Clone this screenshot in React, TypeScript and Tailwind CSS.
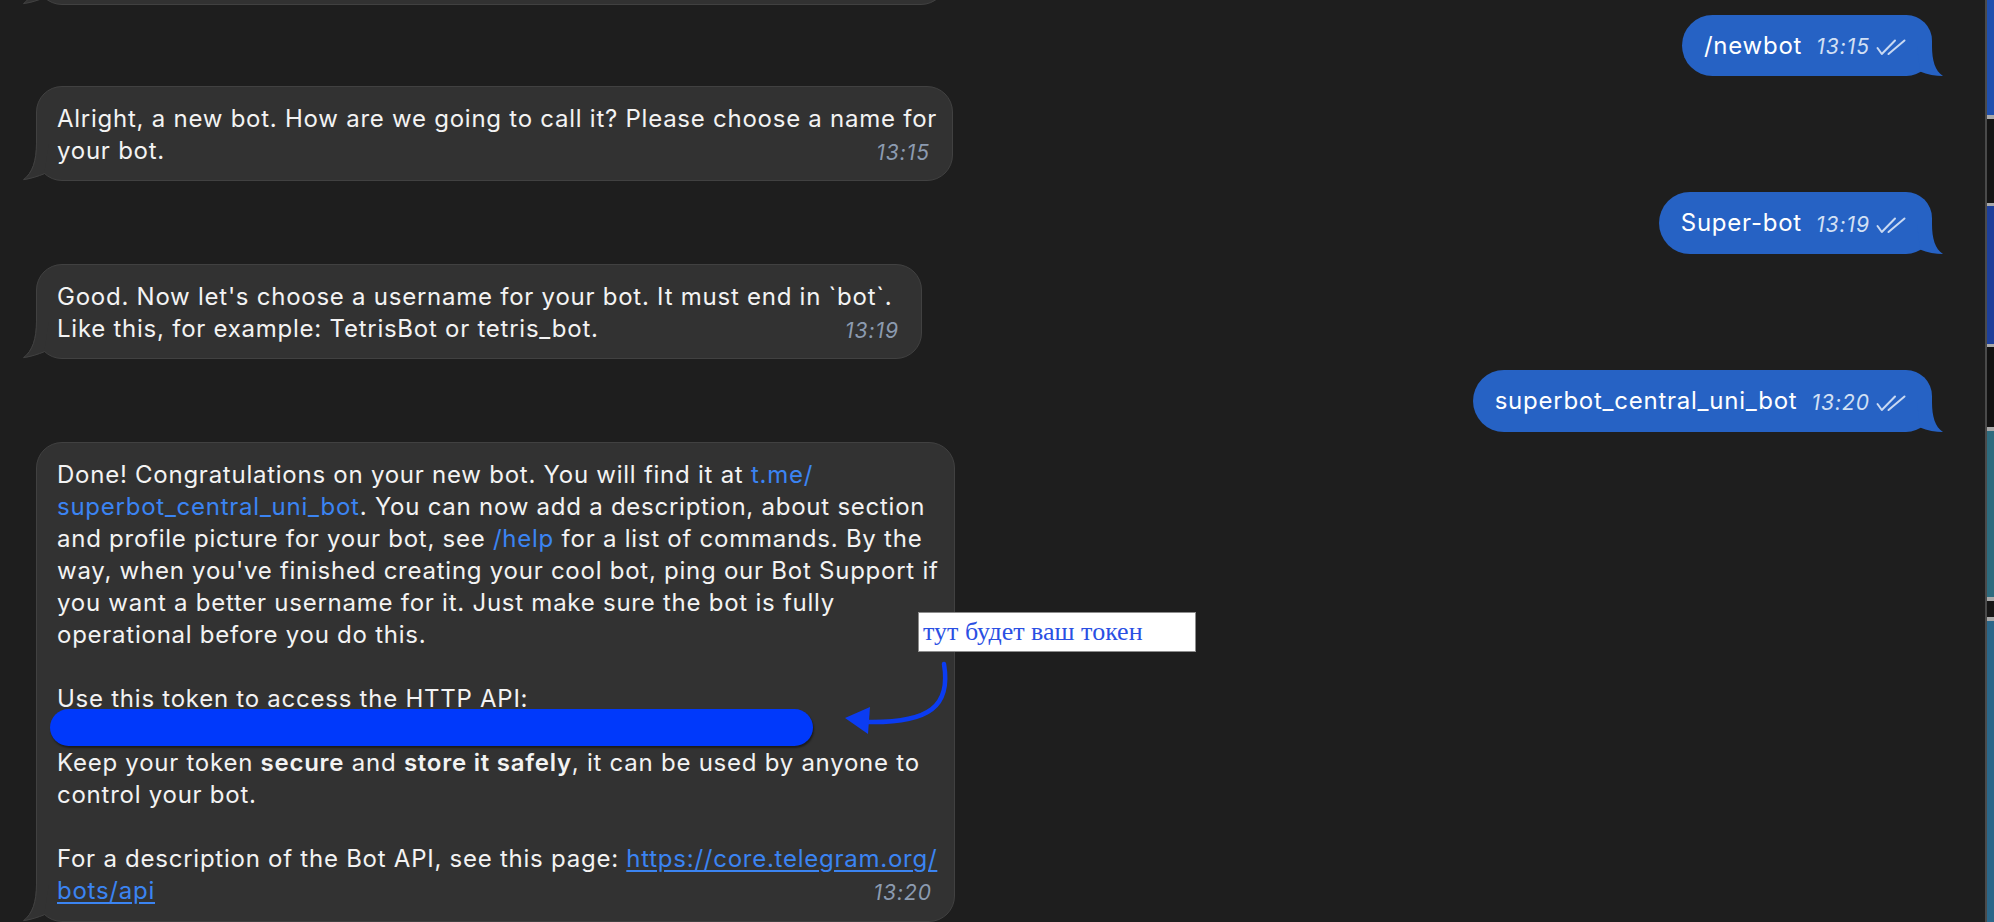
import React from "react";

function InTail() {
  return (
    <svg
      className="absolute left-[-14px] bottom-[-1px]"
      width="30"
      height="38"
      viewBox="0 0 30 38"
    >
      <path d="M13 0 C13 18 9 30 0 37 C8 36 15 33.5 21.2 30.8 L26 0 Z" fill="#323232" />
      <path
        d="M13.5 0 C13.5 18 9.5 30 0.5 36.6 C8 35.6 15 33.3 21.2 30.8"
        fill="none"
        stroke="#414141"
        strokeWidth="1"
      />
    </svg>
  );
}

function OutTail() {
  return (
    <svg
      className="absolute right-[-11px] bottom-0"
      width="26"
      height="30"
      viewBox="0 0 26 30"
    >
      <path d="M15 0 C15 14 18 25 26 30 C19 30 10 28.5 3 25.5 L0 0 Z" fill="#2662c4" />
    </svg>
  );
}

function Checks() {
  return (
    <svg width="30" height="17" viewBox="0 0 30 17" className="ml-[6px] mt-[4px]">
      <path
        d="M1.5 9 L5.8 15 L19 1.5 M12.5 15 L28.5 1.5"
        fill="none"
        stroke="#c9d9f2"
        strokeWidth="2"
        strokeLinecap="round"
        strokeLinejoin="round"
      />
    </svg>
  );
}

function OutBubble({ text, time, mt }: { text: string; time: string; mt: string }) {
  return (
    <div
      className={`relative self-end mr-[53px] h-[62px] flex items-center bg-[#2662c4] rounded-l-[31px] rounded-r-[26px] pl-[22px] pr-[26px] ${mt}`}
    >
      <span className="text-[24px] tracking-[0.75px] text-white leading-[32px]">{text}</span>
      <span className="ml-[14px] text-[21px] tracking-[1px] italic text-[#d3e0f4] leading-[32px] mt-[3px]">
        {time}
      </span>
      <Checks />
      <OutTail />
    </div>
  );
}

function Time({ t }: { t: string }) {
  return (
    <span className="text-[21px] tracking-[1px] italic text-[#8c9bb0] leading-[32px] mt-[2px]">{t}</span>
  );
}

const inBase =
  "relative ml-[36px] bg-[#323232] border border-[#414141] rounded-[26px] pl-[20px] pr-[22px] pt-[16px] text-[24px] tracking-[0.75px] leading-[32px] text-[#f3f3f3] whitespace-nowrap";

const link = "text-[#3b84f2]";

export default function App() {
  return (
    <div className="w-[1994px] h-[922px] overflow-hidden bg-[#1e1e1e] flex font-['Inter','Noto_Sans',sans-serif]">
      <div className="relative flex-1 flex flex-col items-start overflow-hidden">
        {/* partially visible previous bubble */}
        <div className={`${inBase} w-[911px] h-[100px] mt-[-95px] pb-[11px]`}>
          <InTail />
        </div>

        <OutBubble text="/newbot" time="13:15" mt="mt-[10px]" />

        <div className={`${inBase} w-[917px] mt-[10px] pb-[11px]`}>
          <div>Alright, a new bot. How are we going to call it? Please choose a name for</div>
          <div className="flex justify-between">
            <span>your bot.</span>
            <Time t="13:15" />
          </div>
          <InTail />
        </div>

        <OutBubble text="Super-bot" time="13:19" mt="mt-[11px]" />

        <div className={`${inBase} w-[886px] mt-[10px] pb-[11px]`}>
          <div>Good. Now let's choose a username for your bot. It must end in `bot`.</div>
          <div className="flex justify-between">
            <span>Like this, for example: TetrisBot or tetris_bot.</span>
            <Time t="13:19" />
          </div>
          <InTail />
        </div>

        <OutBubble text="superbot_central_uni_bot" time="13:20" mt="mt-[11px]" />

        <div className={`${inBase} w-[919px] mt-[10px] pb-[12px]`}>
          <div>
            Done! Congratulations on your new bot. You will find it at <span className={link}>t.me/</span>
          </div>
          <div>
            <span className={link}>superbot_central_uni_bot</span>. You can now add a description, about section
          </div>
          <div>
            and profile picture for your bot, see <span className={link}>/help</span> for a list of commands. By the
          </div>
          <div>way, when you've finished creating your cool bot, ping our Bot Support if</div>
          <div>you want a better username for it. Just make sure the bot is fully</div>
          <div>operational before you do this.</div>
          <div className="h-[32px]" />
          <div>Use this token to access the HTTP API:</div>
          <div className="relative h-[32px]">
            <div className="absolute left-[-7px] top-[-6px] w-[763px] h-[37px] rounded-full bg-[#0039fb] shadow-[1px_2px_2px_rgba(0,0,0,0.45)]" />
          </div>
          <div>
            Keep your token <span className="font-semibold">secure</span> and{" "}
            <span className="font-semibold">store it safely</span>, it can be used by anyone to
          </div>
          <div>control your bot.</div>
          <div className="h-[32px]" />
          <div>
            For a description of the Bot API, see this page:{" "}
            <span className={`${link} underline underline-offset-[3px]`}>https://core.telegram.org/</span>
          </div>
          <div className="flex justify-between">
            <span className={`${link} underline underline-offset-[3px]`}>bots/api</span>
            <Time t="13:20" />
          </div>
          <InTail />
        </div>

        {/* annotation overlay */}
        <div className="absolute left-[918px] top-[612px] w-[278px] h-[40px] bg-white border border-[#8d8d8d] pl-[4px] flex items-center font-['Liberation_Serif',serif] text-[26px] tracking-normal text-[#2a4fe3] leading-none">
          тут будет ваш токен
        </div>
        <svg className="absolute left-[830px] top-[655px]" width="130" height="90" viewBox="830 655 130 90">
          <path
            d="M944 664 C951 706 930 723 868 722"
            fill="none"
            stroke="#0b3cf2"
            strokeWidth="4.5"
            strokeLinecap="round"
          />
          <path d="M845 718 L870 707 L868 734 Z" fill="#0b3cf2" />
        </svg>
      </div>
      <div className="w-[2px] bg-[#4a4a4a]" />
      <div className="w-[7px] flex flex-col">
        <div className="h-[115px] bg-[#1f4fae]" />
        <div className="h-[4px] bg-[#a9a9a9]" />
        <div className="h-[84px] bg-[#151515]" />
        <div className="h-[3px] bg-[#a9a9a9]" />
        <div className="h-[138px] bg-[#1d3f9a]" />
        <div className="h-[3px] bg-[#a9a9a9]" />
        <div className="h-[80px] bg-[#121212]" />
        <div className="h-[4px] bg-[#a9a9a9]" />
        <div className="h-[166px] bg-[#2d6b7e]" />
        <div className="h-[4px] bg-[#a9a9a9]" />
        <div className="h-[16px] bg-[#161616]" />
        <div className="h-[4px] bg-[#a9a9a9]" />
        <div className="flex-1 bg-[#2a6689]" />
      </div>
    </div>
  );
}
